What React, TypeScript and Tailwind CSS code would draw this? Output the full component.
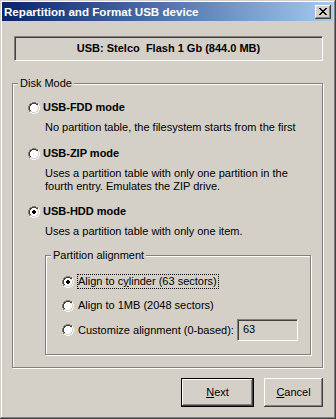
import type { ReactNode } from "react";
import clsx from "clsx";

// classic 12x12 radio bitmap: G shadow, D dark shadow, W window, L light, H highlight, X dot
const RADIO = [
  "....GGGG....",
  "..GGDDDDGG..",
  ".GDDWWWWDDH.",
  ".GDWWWWWWLH.",
  "GDWWWWWWWWLH",
  "GDWWWWWWWWLH",
  "GDWWWWWWWWLH",
  "GDWWWWWWWWLH",
  ".GDWWWWWWLH.",
  ".GLLWWWWLLH.",
  "..HHLLLLHH..",
  "....HHHH....",
];

const DOT = [
  "............",
  "............",
  "............",
  "............",
  ".....XX.....",
  "....XXXX....",
  "....XXXX....",
  ".....XX.....",
];

const CLOSE_X = [
  "XX....XX",
  ".XX..XX.",
  "..XXXX..",
  "...XX...",
  "..XXXX..",
  ".XX..XX.",
  "XX....XX",
];

const PALETTE: Record<string, string> = {
  G: "#808080",
  D: "#404040",
  W: "#ffffff",
  L: "#d4d0c8",
  H: "#ffffff",
  X: "#000000",
};

function Pixels({ rows, w, h }: { rows: string[][]; w: number; h: number }) {
  return (
    <svg width={w} height={h} viewBox={`0 0 ${w} ${h}`} shapeRendering="crispEdges" className="shrink-0 block">
      {rows.map((layer, li) =>
        layer.map((row, y) =>
          row.split("").map((c, x) =>
            PALETTE[c] ? <rect key={`${li}-${x}-${y}`} x={x} y={y} width={1} height={1} fill={PALETTE[c]} /> : null
          )
        )
      )}
    </svg>
  );
}

function RadioDot({ checked }: { checked?: boolean }) {
  return <Pixels rows={checked ? [RADIO, DOT] : [RADIO]} w={12} h={12} />;
}

function Radio({
  checked,
  focused,
  bold,
  gap,
  children,
}: {
  checked?: boolean;
  focused?: boolean;
  bold?: boolean;
  gap: string;
  children: ReactNode;
}) {
  return (
    <div className={clsx("flex items-center", gap)}>
      <RadioDot checked={checked} />
      <span
        className={clsx(
          "border leading-[13px] pr-[1px]",
          focused ? "border-dotted border-black" : "border-transparent",
          bold && "font-bold"
        )}
      >
        {children}
      </span>
    </div>
  );
}

function GroupBox({ label, className, children }: { label: string; className: string; children: ReactNode }) {
  return (
    <div className={clsx("relative border border-[#808080] shadow-[inset_1px_1px_0_#fff,1px_1px_0_#fff]", className)}>
      <span className="absolute -top-[7px] left-[5px] px-[2px] bg-[#d4d0c8] leading-[13px]">{label}</span>
      {children}
    </div>
  );
}

const bevel =
  "shadow-[inset_-1px_-1px_0_#404040,inset_1px_1px_0_#fff,inset_-2px_-2px_0_#808080]";

export default function App() {
  return (
    <div className="w-[336px] h-[419px] bg-[#d4d0c8] pt-[2px] pl-[2px] pr-[3px] pb-[3px] shadow-[inset_-1px_-1px_0_#404040,inset_1px_1px_0_#d4d0c8,inset_-2px_-2px_0_#808080,inset_2px_2px_0_#fff] font-['Liberation_Sans',Arial,sans-serif] text-[11px] text-black overflow-hidden">
      {/* title bar */}
      <div className="h-[19px] flex items-center justify-between pl-[2px] pr-[2px] bg-gradient-to-r from-[#0a246a] to-[#a6caf0]">
        <span className="text-white font-bold text-[11.6px] leading-[13px]">Repartition and Format USB device</span>
        <div className={clsx("w-[16px] h-[14px] bg-[#d4d0c8] flex items-center justify-center", bevel)}>
          <div className="-mt-[1px]">
            <Pixels rows={[CLOSE_X]} w={8} h={7} />
          </div>
        </div>
      </div>

      {/* device */}
      <div className="mt-[15px] ml-[12px] mr-[10px] h-[25px] flex items-center justify-center font-bold border-t border-l border-[#808080] border-b border-r border-b-white border-r-white shadow-[inset_1px_1px_0_#404040]">
        <span className="whitespace-pre">USB: Stelco  Flash 1 Gb (844.0 MB)</span>
      </div>

      {/* disk mode */}
      <GroupBox label="Disk Mode" className="mt-[22px] ml-[10px] w-[311px] pt-[16px] pb-[12px]">
        <div className="pl-[15px]">
          <Radio bold gap="gap-[2px]">USB-FDD mode</Radio>
        </div>
        <p className="mt-[6px] ml-[32px] leading-[13px]">No partition table, the filesystem starts from the first</p>

        <div className="mt-[12px] pl-[15px]">
          <Radio bold gap="gap-[2px]">USB-ZIP mode</Radio>
        </div>
        <p className="mt-[6px] ml-[32px] leading-[13px]">
          Uses a partition table with only one partition in the
          <br />
          fourth entry. Emulates the ZIP drive.
        </p>

        <div className="mt-[11px] pl-[15px]">
          <Radio checked bold gap="gap-[2px]">USB-HDD mode</Radio>
        </div>
        <p className="mt-[6px] ml-[32px] leading-[13px]">Uses a partition table with only one item.</p>

        <GroupBox label="Partition alignment" className="mt-[17px] ml-[32px] w-[266px] pt-[18px] pb-[13px] pl-[16px]">
          <Radio checked focused gap="gap-[3px]">
            Align to c<u>y</u>linder (63 sectors)
          </Radio>
          <div className="mt-[9px]">
            <Radio gap="gap-[3px]">Align to 1MB (2048 sectors)</Radio>
          </div>
          <div className="mt-[6px] h-[22px] flex items-center">
            <div className="w-[175px]">
              <Radio gap="gap-[3px]">Customize alignment (0-based):</Radio>
            </div>
            <input
              readOnly
              value="63"
              className="w-[61px] h-[22px] bg-[#d4d0c8] pl-[5px] pb-[3px] leading-[13px] outline-none border-t border-l border-[#808080] border-b border-r border-b-white border-r-white shadow-[inset_1px_1px_0_#404040,inset_-1px_-1px_0_#d4d0c8]"
            />
          </div>
        </GroupBox>
      </GroupBox>

      {/* buttons */}
      <div className="mt-[10px] mr-[10px] flex justify-end gap-[10px]">
        <button type="button" className="w-[73px] h-[29px] border border-black bg-[#d4d0c8] shadow-[inset_-1px_-1px_0_#404040,inset_1px_1px_0_#fff,inset_-2px_-2px_0_#808080] leading-[13px]">
          <u>N</u>ext
        </button>
        <button type="button" className={clsx("w-[59px] h-[29px] bg-[#d4d0c8] leading-[13px]", bevel)}>
          <u>C</u>ancel
        </button>
      </div>
    </div>
  );
}
